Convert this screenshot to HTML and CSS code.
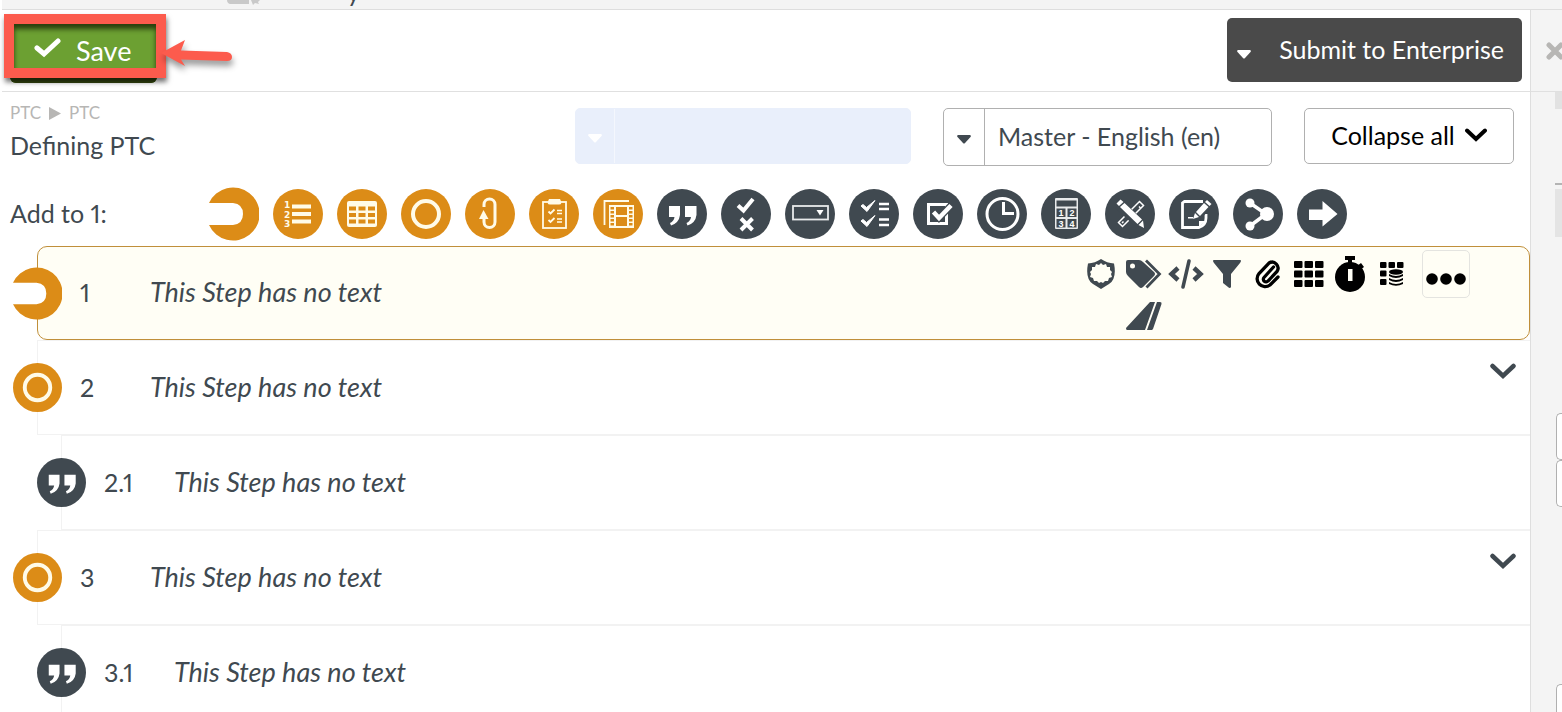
FILE: index.html
```
<!DOCTYPE html>
<html lang="en">
<head>
<meta charset="utf-8">
<title>Defining PTC</title>
<link rel="stylesheet" href="styles.css">
</head>
<body>
<svg class="defs" aria-hidden="true">
  <symbol id="i-start" viewBox="0 0 50 54"><path fill="#dc8c17" d="M0 16A26.500 26.500 0 1 1 0 38H24Q34 37 34 27T24 16Z"/></symbol>
  <symbol id="i-ring" viewBox="0 0 50 50"><circle cx="25" cy="25" r="25" fill="#dc8c17"/><circle cx="25" cy="25" r="13" fill="none" stroke="#fffbe8" stroke-width="4"/></symbol>
  <symbol id="i-quote" viewBox="0 0 50 50"><circle cx="25" cy="25" r="25" fill="#404950"/><path fill="#fff" d="M12 17H23V26Q22 34 14 36.500L13 34Q17 32 17.500 28H12ZM28 17H39.500V26Q38.500 34 30.500 36.500L29.500 34Q33.500 32 34 28H28Z"/></symbol>
</svg>

<div class="strip">
  <svg class="strip-icon" width="34" height="5" viewBox="0 0 34 5"><path fill="#c9c9c9" d="M0 0H22V4H3Q0 3 0 0ZM24 0H33L31 2 32 4 28 3 26 5Z"/></svg>
  <span class="strip-text">y</span>
</div>

<div class="workspace">
  <main class="main">
    <div class="toolbar">
      <div class="save-wrap">
        <button class="save" type="button">
          <svg width="27" height="20" viewBox="0 0 27 20"><path d="M3 10 10 16 24 3" fill="none" stroke="#fff" stroke-width="5" stroke-linecap="round"/></svg>
          Save
        </button>
        <div class="frame"></div>
        <svg class="pointer" width="80" height="44" viewBox="0 0 80 44"><path d="M2 18 26 5 22 15.500 68 17Q73 18 73 22T68 26L22 24.500 26 31Z" fill="#fc5b4d"/></svg>
      </div>
      <button class="submit" type="button">
        <svg width="14" height="9" viewBox="0 0 14 9"><path d="M1 0H13Q14.500 .5 13.500 2L8 8Q7 9 6 8L.5 2Q-.5 .5 1 0Z" fill="#fff"/></svg>
        Submit to Enterprise
      </button>
    </div>

    <div class="heading">
      <div class="titles">
        <nav class="crumbs" aria-label="Breadcrumb"><a href="#">PTC</a><svg width="12" height="13" viewBox="0 0 12 13"><path d="M0 0 12 6.500 0 13Z" fill="#b7b6b4"/></svg><a href="#">PTC</a></nav>
        <h1>Defining PTC</h1>
      </div>
      <div class="combo combo-blank">
        <span class="combo-arrow"><svg width="14" height="9" viewBox="0 0 14 9"><path d="M1 0H13Q14.500 .5 13.500 2L8 8Q7 9 6 8L.5 2Q-.5 .5 1 0Z" fill="#fff"/></svg></span>
        <select aria-label="Version"><option></option></select>
      </div>
      <div class="combo">
        <span class="combo-arrow"><svg width="14" height="9" viewBox="0 0 14 9"><path d="M1 0H13Q14.500 .5 13.500 2L8 8Q7 9 6 8L.5 2Q-.5 .5 1 0Z" fill="#404950"/></svg></span>
        <select aria-label="Language"><option>Master - English (en)</option></select>
      </div>
      <button class="collapse" type="button">Collapse all
        <svg width="22" height="14" viewBox="0 0 22 14"><path d="M2 2.500 11 11 20 2.500" fill="none" stroke="#000" stroke-width="4" stroke-linecap="round"/></svg>
      </button>
    </div>

    <div class="adder">
      <span class="adder-label">Add to 1:</span>
      <div class="palette">
        <button type="button" aria-label="Step"><svg width="50" height="54"><use href="#i-start"/></svg></button>
        <button type="button" aria-label="Numbered list"><svg width="50" height="50" viewBox="0 0 50 50"><circle cx="25" cy="25" r="25" fill="#dc8c17"/><g fill="#fffbe8"><path d="M19 15.500H38V19.500H19ZM19 23H38V27H19ZM19 30.500H38V34.500H19Z"/><g class="digits-list"><text x="11" y="19">1</text><text x="11" y="28.500">2</text><text x="11" y="38">3</text></g></g></svg></button>
        <button type="button" aria-label="Table"><svg width="50" height="50" viewBox="0 0 50 50"><circle cx="25" cy="25" r="25" fill="#dc8c17"/><rect x="10" y="12" width="30" height="26" rx="2" fill="#fffbe8"/><path fill="#dc8c17" d="M12 17.500h7v4h-7zM21.500 17.500h7v4h-7zM31 17.500h7v4h-7zM12 24h7v4h-7zM21.500 24h7v4h-7zM31 24h7v4h-7zM12 30.500h7v4h-7zM21.500 30.500h7v4h-7zM31 30.500h7v4h-7z"/></svg></button>
        <button type="button" aria-label="Circle"><svg width="50" height="50"><use href="#i-ring"/></svg></button>
        <button type="button" aria-label="Loop"><svg width="50" height="50" viewBox="0 0 50 50"><circle cx="25" cy="25" r="25" fill="#dc8c17"/><path d="M19 18V15.500A5.500 5.500 0 0 1 30 15.500V33A5.500 5.500 0 0 1 19 33V28" fill="none" stroke="#fffbe8" stroke-width="3"/><path d="M18.500 21 23.500 30H14Z" fill="#fffbe8"/></svg></button>
        <button type="button" aria-label="Clipboard"><svg width="50" height="50" viewBox="0 0 50 50"><circle cx="25" cy="25" r="25" fill="#dc8c17"/><rect x="14" y="13" width="23" height="26" fill="none" stroke="#fffbe8" stroke-width="1.800"/><path d="M20 10H31Q34 15.500 30 15.500H21Q17 15.500 20 10Z" fill="#fffbe8"/><path d="M19.500 22.500 21.500 24.500 25.500 20.500M19.500 31 21.500 33 25.500 29" fill="none" stroke="#fffbe8" stroke-width="1.800"/><path d="M28 21.500H33M28 24.500H33M28 30H33M28 33H33" stroke="#fffbe8" stroke-width="1.500"/></svg></button>
        <button type="button" aria-label="Media"><svg width="50" height="50" viewBox="0 0 50 50"><circle cx="25" cy="25" r="25" fill="#dc8c17"/><path d="M11.500 36V12H36" fill="none" stroke="#fffbe8" stroke-width="1.800"/><rect x="16" y="16" width="25" height="23" fill="#fffbe8"/><path fill="#dc8c17" d="M23 18h11v8H23zM23 28h11v9H23zM17.500 18h3.500v2.500h-3.500zM17.500 22h3.500v2.500h-3.500zM17.500 26h3.500v2.500h-3.500zM17.500 30h3.500v2.500h-3.500zM17.500 34h3.500v2.500h-3.500zM36 18h3.500v2.500H36zM36 22h3.500v2.500H36zM36 26h3.500v2.500H36zM36 30h3.500v2.500H36zM36 34h3.500v2.500H36z"/></svg></button>
        <button type="button" aria-label="Text"><svg width="50" height="50"><use href="#i-quote"/></svg></button>
        <button type="button" aria-label="Yes or no"><svg width="50" height="50" viewBox="0 0 50 50"><circle cx="25" cy="25" r="25" fill="#404950"/><path d="M17 16.500 22.500 21.500 32 10M20 29.500 31.500 41M31.500 29.500 20 41" fill="none" stroke="#fff" stroke-width="4"/></svg></button>
        <button type="button" aria-label="Drop-down"><svg width="50" height="50" viewBox="0 0 50 50"><circle cx="25" cy="25" r="25" fill="#404950"/><rect x="8" y="17" width="35" height="13.500" fill="none" stroke="#e8eaeb" stroke-width="1.800"/><path d="M31.500 21H38.500L35 26.500Z" fill="#fff"/></svg></button>
        <button type="button" aria-label="Checklist"><svg width="50" height="50" viewBox="0 0 50 50"><circle cx="25" cy="25" r="25" fill="#404950"/><path d="M12 17 14 15.500 17.500 18.500 26 11.500 18 22.500ZM12 32 14 30.500 17.500 33.500 26 26.500 18 37.500Z" fill="#fff" stroke="#fff"/><path d="M30 15H40M30 20H40M30 30.500H40M30 36H40" stroke="#fff" stroke-width="2.500"/></svg></button>
        <button type="button" aria-label="Checkbox"><svg width="50" height="50" viewBox="0 0 50 50"><circle cx="25" cy="25" r="25" fill="#404950"/><rect x="15.500" y="15.500" width="18" height="19" fill="none" stroke="#fff" stroke-width="3"/><path d="M20.500 23 26 29 38.500 16" fill="none" stroke="#404950" stroke-width="7"/><path d="M20.500 23 26 29 38 16.500" fill="none" stroke="#fff" stroke-width="4.500"/></svg></button>
        <button type="button" aria-label="Time"><svg width="50" height="50" viewBox="0 0 50 50"><circle cx="25" cy="25" r="25" fill="#404950"/><circle cx="25.500" cy="25" r="15.500" fill="none" stroke="#fff" stroke-width="3"/><path d="M26.500 13V24.500H37" fill="none" stroke="#fff" stroke-width="3"/></svg></button>
        <button type="button" aria-label="Calculator"><svg width="50" height="50" viewBox="0 0 50 50"><circle cx="25" cy="25" r="25" fill="#404950"/><rect x="14" y="9" width="23" height="31" rx="1" fill="#e8eaeb"/><path fill="#404950" d="M15.500 11.500h20v6h-20zM15.500 19.500h9v8.500h-9zM26.500 19.500h9v8.500h-9zM15.500 30h9v8.500h-9zM26.500 30h9v8.500h-9z"/><g class="digits-calc"><text x="17.500" y="27">1</text><text x="28.500" y="27">2</text><text x="17.500" y="37.500">3</text><text x="28.500" y="37.500">4</text></g></svg></button>
        <button type="button" aria-label="Measure"><svg width="50" height="50" viewBox="0 0 50 50"><circle cx="25" cy="25" r="25" fill="#404950"/><path d="M34.500 12.500 38.500 16.500 17.500 37.500 13.500 33.500Z" fill="none" stroke="#fff" stroke-width="1.500"/><path d="M34 17.500 35.500 19M17 34 18.500 32.500" stroke="#fff" stroke-width="1.500"/><path d="M14 15.500 35 35" stroke="#404950" stroke-width="10"/><path d="M11.500 14.500 15.500 10.500 18.500 13 14 17ZM15 18 19.500 14 37 30.500 32.500 35ZM33.500 36 38 31.500 39 39Z" fill="#fff"/></svg></button>
        <button type="button" aria-label="Signature"><svg width="50" height="50" viewBox="0 0 50 50"><circle cx="25" cy="25" r="25" fill="#404950"/><path d="M34 12.500H15.500L13.500 14V38.500H30Q37 36 37 29V25" fill="none" stroke="#fff" stroke-width="2.800"/><path d="M30 38V32H37Z" fill="#fff"/><path d="M26 29 41 14" stroke="#404950" stroke-width="9"/><path d="M38 11 42.500 15 40.500 17 36 13ZM35 14 39.500 18 31 27 27 23ZM26 24 30 28 24 30ZM19 28H24V29.500H19Z" fill="#fff"/></svg></button>
        <button type="button" aria-label="Branch"><svg width="50" height="50" viewBox="0 0 50 50"><circle cx="25" cy="25" r="25" fill="#404950"/><g fill="#fff"><circle cx="17" cy="14" r="4.500"/><circle cx="17" cy="37" r="4.500"/><circle cx="34" cy="25" r="7"/></g><path d="M17 14 33 25 17 37" fill="none" stroke="#fff" stroke-width="3.500"/></svg></button>
        <button type="button" aria-label="Go to"><svg width="50" height="50" viewBox="0 0 50 50"><circle cx="25" cy="25" r="25" fill="#404950"/><path d="M12 20.500H25.500V12L40.500 25 25.500 37.500V31H12Z" fill="#fff"/></svg></button>
      </div>
    </div>

    <ol class="steps">
      <li class="step step-active">
        <svg class="step-icon" width="49" height="53" viewBox="0 0 50 54"><path fill="#fff" d="M0 16H34V38H0Z"/><use href="#i-start" width="50" height="54"/></svg>
        <span class="step-no">1</span>
        <span class="step-text">This Step has no text</span>
        <div class="tools">
          <button type="button" aria-label="Shield"><svg width="28" height="30" viewBox="0 0 28 30"><path d="M14 0Q20 4 27 4.500Q30 20 22 25L14 30 6 25Q-2 20 1 4.500Q8 4 14 0Z" fill="#404950"/><path d="M14 4l2 2 3-1 1 3 3 0 0 3 2 2-1 2 1 3-3 1-1 3-3 0-2 2-2-1-2 1-2-2-3 0-1-3-3-1 1-3-1-2 2-2 0-3 3 0 1-3 3 1z" fill="#fffef5"/></svg></button>
          <button type="button" aria-label="Tags"><svg width="36" height="30" viewBox="0 0 36 30"><path d="M2 1H13Q15 1 17 3L28 13Q30 15 28 17L17 28Q15 30 13 28L2 17Q0 15 0 13V3Q0 1 2 1Z" fill="#404950"/><circle cx="6.500" cy="7" r="2.500" fill="#fffef5"/><path d="M20 1.500 33.500 15 20.500 28.500" fill="none" stroke="#404950" stroke-width="2.800"/></svg></button>
          <button type="button" aria-label="Code"><svg width="36" height="30" viewBox="0 0 36 30"><path d="M10 9 3.500 15 10 21M26 9 32.500 15 26 21" fill="none" stroke="#404950" stroke-width="4.500"/><path d="M21 2 15 28" stroke="#404950" stroke-width="3.500" stroke-linecap="round"/></svg></button>
          <button type="button" aria-label="Filter"><svg width="28" height="30" viewBox="0 0 28 30"><path d="M1 1H27Q29 1 27 4L18 15V28Q17 30 15 28L10 24V15L1 4Q-1 1 1 1Z" fill="#404950"/></svg></button>
          <button type="button" aria-label="Attachment"><svg width="26" height="30" viewBox="0 0 26 30"><path d="M18.500 8 9 18.500A2.500 2.500 0 0 0 13 22L22 12.500A6 6 0 0 0 14 4L4 14.500A8 8 0 0 0 15 26L23 18" fill="none" stroke="#000" stroke-width="3.300" stroke-linecap="round"/></svg></button>
          <button type="button" aria-label="Grid"><svg width="30" height="26" viewBox="0 0 30 26"><g><rect width="8.500" height="7" rx="1"/><rect x="10.500" width="8.500" height="7" rx="1"/><rect x="21" width="8.500" height="7" rx="1"/><rect y="9.500" width="8.500" height="7" rx="1"/><rect x="10.500" y="9.500" width="8.500" height="7" rx="1"/><rect x="21" y="9.500" width="8.500" height="7" rx="1"/><rect y="19" width="8.500" height="7" rx="1"/><rect x="10.500" y="19" width="8.500" height="7" rx="1"/><rect x="21" y="19" width="8.500" height="7" rx="1"/></g></svg></button>
          <button type="button" aria-label="Timer"><svg width="30" height="36" viewBox="0 0 30 36"><circle cx="15" cy="21" r="15"/><path d="M10 0H20V4H17V8H13V4H10ZM22 10 26 7 29 11 25 14Z"/><rect x="13" y="13" width="4.500" height="12" fill="#fffef5"/></svg></button>
          <button type="button" aria-label="Data"><svg width="24" height="26" viewBox="0 0 24 26"><rect y="1" width="6.500" height="6" rx="1"/><rect x="8.500" y="1" width="6.500" height="6" rx="1"/><rect x="17" y="1" width="6.500" height="6" rx="1"/><rect y="9.500" width="6.500" height="6" rx="1"/><rect y="18" width="6.500" height="6" rx="1"/><ellipse cx="16" cy="11" rx="7" ry="2.700"/><path d="M9 13Q16 17 23 13V15Q16 19 9 15ZM9 17Q16 21 23 17V19Q16 23 9 19ZM9 21Q16 25 23 21V23Q16 26.500 9 23Z"/></svg></button>
          <button type="button" class="more" aria-label="More"><svg width="40" height="12" viewBox="0 0 40 12"><circle cx="6" cy="6" r="5.800"/><circle cx="20" cy="6" r="5.800"/><circle cx="34" cy="6" r="5.800"/></svg></button>
          <button type="button" class="road" aria-label="Slope"><svg width="36" height="30" viewBox="0 0 36 30"><path d="M24 1H29L19 29H1Q0 29 0 27ZM31 1H34Q36 1 35.500 3L27 28 26 29H21Z" fill="#404950"/></svg></button>
        </div>
      </li>
      <li class="step">
        <svg class="step-icon" width="49" height="49"><use href="#i-ring"/></svg>
        <span class="step-no">2</span>
        <span class="step-text">This Step has no text</span>
        <button class="toggle" type="button" aria-label="Collapse step 2"><svg width="26" height="17" viewBox="0 0 26 17"><path d="M2.500 3 13 13 23.500 3" fill="none" stroke="#404950" stroke-width="4.500" stroke-linecap="round"/></svg></button>
      </li>
      <li class="step step-child">
        <svg class="step-icon" width="49" height="49"><use href="#i-quote"/></svg>
        <span class="step-no">2.1</span>
        <span class="step-text">This Step has no text</span>
      </li>
      <li class="step">
        <svg class="step-icon" width="49" height="49"><use href="#i-ring"/></svg>
        <span class="step-no">3</span>
        <span class="step-text">This Step has no text</span>
        <button class="toggle" type="button" aria-label="Collapse step 3"><svg width="26" height="17" viewBox="0 0 26 17"><path d="M2.500 3 13 13 23.500 3" fill="none" stroke="#404950" stroke-width="4.500" stroke-linecap="round"/></svg></button>
      </li>
      <li class="step step-child">
        <svg class="step-icon" width="49" height="49"><use href="#i-quote"/></svg>
        <span class="step-no">3.1</span>
        <span class="step-text">This Step has no text</span>
      </li>
    </ol>
  </main>

  <aside class="side">
    <div class="side-top"><button type="button" class="close" aria-label="Close"><svg width="18" height="18" viewBox="0 0 18 18"><path d="M3 3 15 15M15 3 3 15" stroke="#b7b6b4" stroke-width="5" stroke-linecap="round"/></svg></button></div>
    <div class="side-tab"></div>
    <div class="side-rule"></div>
    <div class="side-block"></div>
    <div class="side-field"></div>
    <div class="side-field"></div>
    <div class="side-field side-field-last"></div>
  </aside>
</div>
</body>
</html>
```
FILE: styles.css
```
* {
  box-sizing: border-box;
}

body {
  margin: 0;
  height: 100vh;
  display: flex;
  flex-direction: column;
  overflow: hidden;
  background: #fff;
  color: #404950;
  font-family: Lato, "Open Sans", sans-serif;
  font-size: 25px;
  font-variant-numeric: proportional-nums;
  line-height: 32px;
}

button,
select {
  margin: 0;
  padding: 0;
  border: 0;
  background: none;
  color: inherit;
  font: inherit;
}

svg {
  display: block;
  flex: none;
}

.defs {
  position: absolute;
  width: 0;
  height: 0;
}

.strip {
  flex: none;
  display: flex;
  align-items: flex-start;
  gap: 86px;
  height: 10px;
  margin-left: 2px;
  padding-left: 225px;
  overflow: hidden;
  border-bottom: 1px solid #dedede;
  background: #f4f4f4;
}

.strip-text {
  align-self: flex-end;
  line-height: 22px;
  padding-bottom: 6px;
}

.workspace {
  flex: 1;
  min-height: 0;
  display: flex;
}

.main {
  flex: 1;
  min-width: 0;
}

.toolbar {
  display: flex;
  align-items: center;
  justify-content: space-between;
  height: 82px;
  margin-left: 2px;
  padding: 0 8px 2px;
  border-bottom: 1px solid #e0e0e0;
}

.save-wrap {
  position: relative;
  padding-top: 4px;
}

.save {
  display: flex;
  align-items: center;
  gap: 15px;
  width: 147px;
  height: 62px;
  padding: 0 24px 2px;
  border-radius: 6px;
  background: #6ca032;
  box-shadow: inset 0 -5px #34460f;
  color: #fff;
  font-size: 27px;
}

.save svg {
  margin-bottom: 6px;
}

.frame {
  position: absolute;
  top: -3px;
  left: -6px;
  width: 162px;
  height: 64px;
  border: 10px solid #fc5b4d;
  box-shadow: 1px 4px 5px rgba(0, 0, 0, .55), inset 0 5px 5px rgba(20, 30, 0, .75);
}

.pointer {
  position: absolute;
  top: 18px;
  left: 149px;
  filter: drop-shadow(1px 5px 3px rgba(0, 0, 0, .4));
}

.submit {
  display: flex;
  align-items: center;
  gap: 28px;
  height: 64px;
  padding: 0 18px 2px 10px;
  border-radius: 5px;
  background: #4a4a4a;
  color: #fff;
}

.submit svg {
  margin-top: 12px;
}

.heading {
  display: flex;
  align-items: flex-start;
  padding: 16px 16px 0 10px;
  gap: 32px;
}

.titles {
  flex: 1;
}

.crumbs {
  display: flex;
  align-items: center;
  gap: 8px;
  height: 10px;
  font-size: 17px;
  line-height: 20px;
}

.crumbs a {
  color: #b7b6b4;
  text-decoration: none;
}

h1 {
  margin: 11px 0 0;
  font-size: 25px;
  font-weight: 400;
  line-height: 32px;
}

.combo {
  display: flex;
  width: 329px;
  height: 58px;
  border: 1px solid #b0b0b0;
  border-radius: 5px;
}

.combo-arrow {
  display: flex;
  align-items: center;
  justify-content: center;
  width: 41px;
  padding-top: 4px;
  border-right: 1px solid #b0b0b0;
}

.combo select {
  flex: 1;
  padding: 0 0 2px 13px;
  appearance: none;
}

.combo-blank {
  width: 336px;
  height: 56px;
  border-color: #e9effb;
  background: #e9effb;
}

.combo-blank .combo-arrow {
  width: 39px;
  border-color: #f4f7fd;
}

.collapse {
  display: flex;
  align-items: center;
  justify-content: center;
  gap: 10px;
  width: 210px;
  height: 56px;
  padding-bottom: 2px;
  border: 1px solid #b0b0b0;
  border-radius: 5px;
  color: #000;
}

.adder {
  display: flex;
  align-items: center;
  height: 80px;
  padding: 16px 0 0 10px;
}

.adder-label {
  width: 199px;
  padding-bottom: 3px;
}

.palette {
  display: flex;
  align-items: center;
  gap: 14px;
}

.digits-list {
  font: bold 9px "DejaVu Sans", sans-serif;
}

.digits-calc {
  fill: #fff;
  font: bold 9px "Liberation Sans", sans-serif;
}

.steps {
  margin: 0;
  padding: 0;
  list-style: none;
}

.step {
  display: flex;
  align-items: center;
  height: 95px;
  margin-left: 37px;
  border: solid #f2f2f2;
  border-width: 1px 0 1px 1px;
}

.step-child {
  margin-left: 61px;
}

.step-active {
  height: 94px;
  border: 1px solid #c08f3a;
  border-radius: 10px;
  background: #fffef5;
}

.step-icon {
  margin-left: -25px;
}

.step-no {
  width: 70px;
  margin-left: 18px;
  padding-bottom: 2px;
}

.step-text {
  flex: 1;
  padding-bottom: 2px;
  font-size: 27px;
  font-style: italic;
}

.toggle {
  align-self: flex-start;
  margin: 22px 14px 0 0;
}

.tools {
  align-self: flex-start;
  display: grid;
  grid-template-columns: 43px 43px 41px 41px 41px 41px 42px 42px 66px;
  grid-auto-rows: 42px;
  justify-items: center;
  align-items: center;
  margin: 6px 50px 0 0;
}

.tools .more {
  display: flex;
  align-items: center;
  justify-content: center;
  width: 48px;
  height: 48px;
  padding-top: 10px;
  border: 1px solid #e4e4e0;
  border-radius: 5px;
}

.tools .road {
  grid-column: 2;
}

.side {
  flex: none;
  display: flex;
  flex-direction: column;
  align-items: flex-end;
  width: 32px;
  overflow: hidden;
  border-left: 1px solid #dedede;
  background: #f4f4f4;
}

.side > div {
  flex: none;
}

.side-top {
  display: flex;
  align-items: center;
  width: 100%;
  height: 82px;
  padding-left: 15px;
  border-bottom: 1px solid #e0e0e0;
}

.side-tab {
  width: 7px;
  height: 17px;
  background: #e2e2e2;
}

.side-rule {
  width: 7px;
  height: 2px;
  margin-top: 74px;
  background: #b4b4b4;
}

.side-block {
  width: 7px;
  height: 48px;
  margin: 4px 0 176px;
  background: #e4e4e4;
}

.side-field {
  width: 6px;
  height: 47px;
  border: 1px solid #b0b0b0;
  border-right: 0;
  border-radius: 5px 0 0 5px;
  background: #fff;
}

.side-field-last {
  margin-top: 177px;
}
```
